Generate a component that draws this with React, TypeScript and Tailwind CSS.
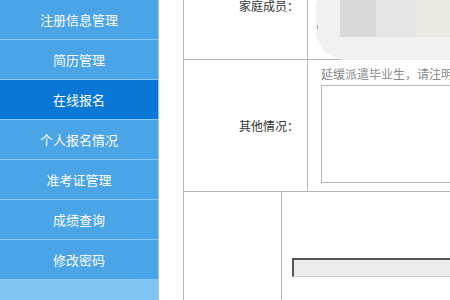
const menu = [
  { label: "注册信息管理", active: false },
  { label: "简历管理", active: false },
  { label: "在线报名", active: true },
  { label: "个人报名情况", active: false },
  { label: "准考证管理", active: false },
  { label: "成绩查询", active: false },
  { label: "修改密码", active: false },
];

function Sidebar() {
  return (
    <div className="w-[159px] shrink-0 h-[300px] overflow-hidden bg-[#7fc5f2] border-r border-[#8fd0f7]">
      <ul>
        {menu.map((m) => (
          <li
            key={m.label}
            className={
              "h-[40px] flex items-center justify-center text-[13px] text-white border-b border-[#86c9f4] " +
              (m.active ? "bg-[#0a77d6]" : "bg-[#4aa4e6]")
            }
          >
            {m.label}
          </li>
        ))}
      </ul>
    </div>
  );
}

function Blurred() {
  return (
    <div className="relative w-full h-[60px] overflow-hidden">
      <div className="absolute left-[4px] -top-[20px] w-[200px] h-[80px] rounded-[30px] bg-[#f1f1f1]" />
      <div className="absolute left-[28px] top-0 flex h-[37px]">
        <div className="w-[36px] bg-[#d9d9d9]" />
        <div className="w-[40px] bg-[#e5e5e5]" />
        <div className="w-[40px] bg-[#ece9e5]" />
      </div>
      <div className="absolute left-[5px] top-[25px] w-px h-[4px] bg-[#aaa]" />
    </div>
  );
}

export default function App() {
  return (
    <div
      className="w-[450px] h-[300px] overflow-hidden flex bg-white"
      style={{ fontFamily: '"Noto Sans CJK SC", sans-serif' }}
    >
      <Sidebar />
      <div className="flex-1 pl-[24px] overflow-hidden">
        <div className="w-[320px] border-l border-[#b5b5b5] text-[12px] text-[#333]">
          <div className="flex h-[60px] border-b border-[#b5b5b5]">
            <div className="w-[124px] shrink-0 border-r border-[#bdbdbd] text-right pr-[8px] -mt-[2px] leading-[16px]">
              家庭成员：
            </div>
            <div className="flex-1 pl-[4px]">
              <Blurred />
            </div>
          </div>
          <div className="flex h-[132px] border-b border-[#b5b5b5]">
            <div className="w-[124px] shrink-0 border-r border-[#bdbdbd] flex items-center justify-end pr-[8px]">
              其他情况：
            </div>
            <div className="flex-1 pl-[13px] pt-[6px] overflow-hidden">
              <div className="text-[#8a8a8a] leading-[16px] whitespace-nowrap">
                延缓派遣毕业生，请注明
              </div>
              <div className="mt-[3px] h-[98px] w-[200px] border border-[#b8b8b8]" />
            </div>
          </div>
          <div className="flex h-[120px]">
            <div className="w-[98px] shrink-0 border-r border-[#bdbdbd]" />
            <div className="flex-1 pl-[10px] pt-[66px]">
              <div className="h-[19px] w-[220px] bg-[#ededed] border-t-2 border-l-2 border-[#555] border-b border-b-[#d0d0d0]" />
            </div>
          </div>
        </div>
      </div>
    </div>
  );
}
